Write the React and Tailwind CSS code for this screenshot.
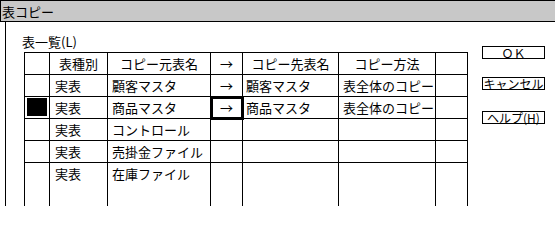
import React from 'react'

const rows = [
  { kind: "実表", src: "顧客マスタ", arrow: true, dst: "顧客マスタ", how: "表全体のコピー" },
  { kind: "実表", src: "商品マスタ", arrow: true, dst: "商品マスタ", how: "表全体のコピー", current: true },
  { kind: "実表", src: "コントロール" },
  { kind: "実表", src: "売掛金ファイル" },
  { kind: "実表", src: "在庫ファイル", last: true },
]

const cellBase = "border-r border-black flex items-center whitespace-nowrap overflow-hidden"

function App() {
  return (
    <div className="w-[555px] h-[206px] overflow-hidden bg-white text-black text-[13px]" style={{ fontFamily: '"Noto Sans CJK JP", "Liberation Sans", sans-serif' }}>
      {/* title bar */}
      <div className="w-[555px] h-[22px] border-y border-l border-black flex items-center pl-[1px] leading-none bg-[#c8c8c8]">
        <span>表コピー</span>
      </div>

      <div className="ml-[5px] h-[184px] border-l border-black flex">
        <div className="pl-[18px] pt-[12px]">
          <div className="-ml-[2px] h-[15px] leading-[15px]">表一覧(L)</div>
          <div className="mt-[3px] grid grid-cols-[25px_58px_103px_32px_96px_97px_32px] grid-rows-[22px_22px_22px_22px_22px_22px_40px] border-l border-t border-black leading-none">
            <div className={cellBase + " border-b"}></div>
            <div className={cellBase + " border-b justify-center"}>表種別</div>
            <div className={cellBase + " border-b justify-center"}>コピー元表名</div>
            <div className={cellBase + " border-b justify-center"}>→</div>
            <div className={cellBase + " border-b justify-center"}>コピー先表名</div>
            <div className={cellBase + " border-b justify-center"}>コピー方法</div>
            <div className={cellBase + " border-b"}></div>

            {rows.map((r, i) => {
              const cell = cellBase + (r.last ? " items-start pt-[4px]" : " border-b")
              return (
                <React.Fragment key={i}>
                  <div className={cell + " items-start"}>
                    {r.current && <div className="ml-[2px] mt-[1px] w-[20px] h-[18px] bg-black"></div>}
                  </div>
                  <div className={cell + " pl-[5px]"}>{r.kind}</div>
                  <div className={cell + " pl-[4px]"}>{r.src}</div>
                  <div className={cell + " justify-center relative overflow-visible"}>
                    {r.arrow ? "→" : ""}
                    {r.current && <div className="absolute -left-px -top-px w-[34px] h-[24px] border-[3px] border-black"></div>}
                  </div>
                  <div className={cell + " pl-[3px]"}>{r.dst}</div>
                  <div className={cell + " pl-[4px]"}>{r.how}</div>
                  <div className={cell}></div>
                </React.Fragment>
              )
            })}
            <div className="border-r border-black"></div>
            <div className="border-r border-black"></div>
            <div className="border-r border-black"></div>
            <div className="border-r border-black"></div>
            <div className="border-r border-black"></div>
            <div className="border-r border-black"></div>
            <div className="border-r border-black"></div>
          </div>
        </div>

        <div className="ml-[14px] pt-[24px] flex flex-col text-[12px] leading-none">
          <div className="w-[63px] h-[13px] border border-black flex items-center justify-center">ＯＫ</div>
          <div className="mt-[18px] w-[63px] h-[13px] border border-black flex items-center justify-center overflow-visible whitespace-nowrap">キャンセル</div>
          <div className="mt-[21px] w-[63px] h-[13px] border border-black flex items-center justify-center">ヘルプ(H)</div>
        </div>
      </div>
    </div>
  )
}

export default App
